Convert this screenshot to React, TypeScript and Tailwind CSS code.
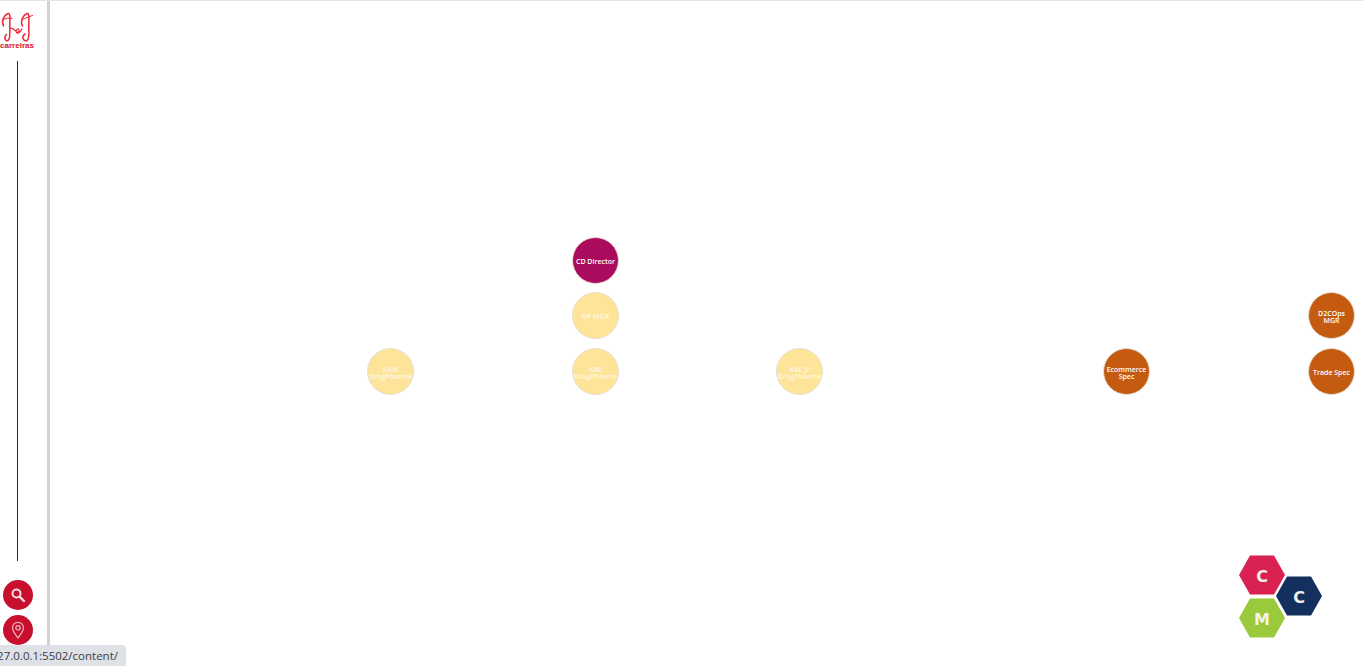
const nodes = [
  { x: 572, y: 238, lines: ["CD Director"], cls: "bg-[#ab0b5c] text-white" },
  { x: 572, y: 293, lines: ["DP MGR"], cls: "bg-[#fee498] text-[#fff8e4]" },
  { x: 367, y: 349, lines: ["KAM", "DrugPharma"], cls: "bg-[#fee498] text-[#fff8e4]" },
  { x: 572, y: 349, lines: ["KAE", "DrugPharma"], cls: "bg-[#fee498] text-[#fff8e4]" },
  { x: 776, y: 349, lines: ["KAE Jr", "DrugPharma"], cls: "bg-[#fee498] text-[#fff8e4]" },
  { x: 1103, y: 349, lines: ["Ecommerce", "Spec"], cls: "bg-[#c55a11] text-white" },
  { x: 1308, y: 293, lines: ["D2COps", "MGR"], cls: "bg-[#c55a11] text-white" },
  { x: 1308, y: 349, lines: ["Trade Spec"], cls: "bg-[#c55a11] text-white" },
];

const hexes = [
  { x: 1238, y: 555, label: "C", fill: "#d92251" },
  { x: 1275, y: 576, label: "C", fill: "#14305f" },
  { x: 1238, y: 598, label: "M", fill: "#9aca3c" },
];

function Logo() {
  return (
    <svg width="34" height="30" viewBox="0 0 34 30" fill="none" stroke="#ee2536" strokeWidth="1.5" strokeLinecap="round">
      <path d="M3.5 14 C1 9 4 3 8 1.5 C10.5 1 10 6 9.8 12 C9.6 19 11 27 8 28.5 C5 29.5 3.5 25 6.5 22.5" />
      <path d="M3 8 C6 6 9 5.5 12 6.5" strokeWidth="1" />
      <path d="M10 16 C12 16 14 17 15.5 19 C17 21 19.5 20.5 19 18 C18.5 15.5 15 18 16.5 20.5 C17.5 22 20 21 22 17" strokeWidth="1.2" />
      <path d="M22.5 14 C20 9 23 3 27 1.5 C29.5 1 29 6 28.8 12 C28.6 19 30 27 27 28.5 C23 29.5 21 24.5 25 22" />
      <path d="M22 8 C25 6 28.5 5 32.5 3.5" strokeWidth="1" />
    </svg>
  );
}

export default function App() {
  return (
    <div className="relative flex h-[666px] w-[1363px] overflow-hidden border-t border-[#e4e4e4] bg-white font-['Open_Sans',sans-serif]">
      <aside className="flex h-full w-[50px] shrink-0 flex-col items-start border-r-[3px] border-[#d2d2d2]">
        <div className="flex w-[34px] flex-col items-center pt-[11px]">
          <Logo />
          <span className="-mt-px text-[8px] leading-[10px] font-bold text-[#d8102f] font-['Liberation_Sans',sans-serif]">carreiras</span>
        </div>
        <div className="mt-[10px] ml-[17px] h-[500px] w-px bg-[#3a2025]" />
        <button className="mt-[19px] ml-[2.5px] flex size-[30px] items-center justify-center rounded-full bg-[#c8102e]">
          <svg width="16" height="16" viewBox="0 0 16 16" fill="none" stroke="#f6dfe3" strokeLinecap="round">
            <circle cx="6.5" cy="6.5" r="4" strokeWidth="2" />
            <path d="M9.8 9.8 L14 14" strokeWidth="2.4" />
          </svg>
        </button>
        <button className="mt-[5px] ml-[2.5px] flex size-[30px] items-center justify-center rounded-full bg-[#c8102e]">
          <svg width="16" height="18" viewBox="0 0 16 18" fill="none" stroke="#f0b9c3" strokeWidth="1.2">
            <path d="M8 17 C5 13 2.5 10 2.5 6.8 A5.5 5.5 0 0 1 13.5 6.8 C13.5 10 11 13 8 17 Z" />
            <circle cx="8" cy="6.8" r="2.2" />
          </svg>
        </button>
      </aside>

      <main className="relative flex-1" />

      {nodes.map((n) => (
        <div
          key={n.x + "-" + n.y}
          className={"absolute flex size-[47px] flex-col items-center justify-center rounded-full border border-[#e6e0d0] pt-[3px] text-center text-[7px] leading-[7.5px] font-semibold " + n.cls}
          style={{ left: n.x, top: n.y - 2 }}
        >
          {n.lines.map((l) => (
            <span key={l} className="whitespace-nowrap">{l}</span>
          ))}
        </div>
      ))}

      {hexes.map((h, i) => (
        <div key={i} className="absolute h-[40px] w-[48px]" style={{ left: h.x, top: h.y - 1 }}>
          <svg width="48" height="40" viewBox="0 0 48 40" className="absolute inset-0">
            <polygon points="1,20 12,0.5 36,0.5 47,20 36,39.5 12,39.5" fill={h.fill} />
          </svg>
          <span className="relative flex h-full items-center justify-center pt-[3px] text-[16px] font-bold text-[#f4f1ea] font-['DejaVu_Sans',sans-serif]">
            {h.label}
          </span>
        </div>
      ))}

      <div className="absolute bottom-0 left-0 flex h-[21px] w-[126px] items-center justify-end overflow-hidden rounded-tr-[4px] bg-[#dee1e6] pr-[8px]">
        <span className="text-[11.5px] whitespace-nowrap text-[#3c4043] font-['Open_Sans',sans-serif]">127.0.0.1:5502/content/</span>
      </div>
    </div>
  );
}
